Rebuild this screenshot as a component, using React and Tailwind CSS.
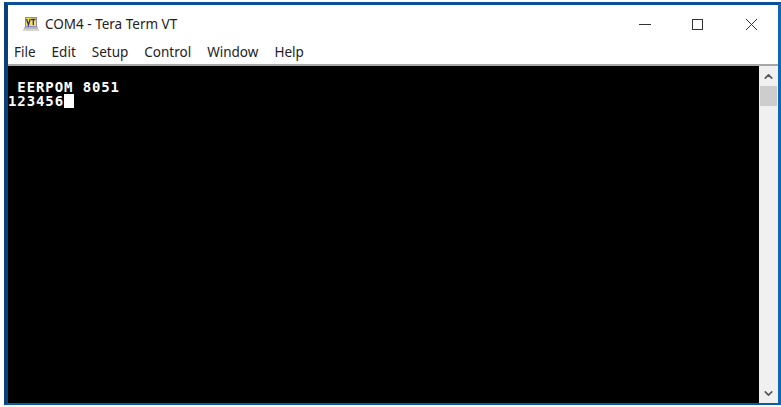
import { ChevronUp, ChevronDown } from "lucide-react";

const menus = ["File", "Edit", "Setup", "Control", "Window", "Help"];

function VtIcon() {
  return (
    <svg width="16" height="15" viewBox="0 0 16 15" className="shrink-0">
      <rect x="2" y="0" width="12" height="10" fill="#8f88c8" />
      <rect x="3" y="1" width="10" height="8" fill="#f2e24e" />
      <path d="M3.6 2 L5.4 8 L7.2 2 M8 2.5 H12.6 M10.3 2.5 V8" stroke="#2f2ba0" strokeWidth="1.3" fill="none" />
      <rect x="1" y="10" width="14" height="2" fill="#b8b8b0" />
      <rect x="0" y="12" width="16" height="2" fill="#d6d6d0" />
    </svg>
  );
}

export default function App() {
  return (
    <div className="h-[407px] w-[781px] overflow-hidden bg-white pb-[2px] pl-[4px] pt-[2px]">
      <div className="flex h-full flex-col border-b-2 border-l-4 border-r-[3px] border-t-[3px] border-b-[#0b5aa6] border-l-[#0a3f7c] border-r-[#0f66b8] border-t-[#0a4f98] bg-white">
        {/* title bar */}
        <div className="flex h-[35px] items-center font-['Noto_Sans',sans-serif] text-[13.5px] text-[#222]">
          <div className="ml-[15px] mr-[6px] mt-[4px]">
            <VtIcon />
          </div>
          <span className="mt-[4px]">COM4 - Tera Term VT</span>
          <div className="ml-auto mt-[4px] flex items-center text-[#333]">
            <div className="mr-[41px] h-px w-[12px] bg-[#333]" />
            <div className="mr-[42px] h-[11px] w-[11px] border border-[#333]" />
            <svg width="13" height="13" viewBox="0 0 13 13" className="mr-[20px]">
              <path d="M1 1 L12 12 M12 1 L1 12" stroke="#333" strokeWidth="1" />
            </svg>
          </div>
        </div>

        {/* menu bar */}
        <div className="flex h-[24px] items-center gap-[16px] pl-[6px] font-['Noto_Sans',sans-serif] text-[13.5px] text-[#222]">
          {menus.map((m) => (
            <span key={m}>{m}</span>
          ))}
        </div>
        <div className="h-[2px] bg-[#a8a8a8]" />

        {/* terminal + scrollbar */}
        <div className="flex min-h-0 flex-1">
          <div className="flex-1 bg-black pt-[14px] font-['DejaVu_Sans_Mono',monospace] text-[14px] font-bold leading-[14px] tracking-[0.9px] text-white">
            <div className="whitespace-pre"> EERPOM 8051</div>
            <div className="flex items-center whitespace-pre">
              123456
              <span className="h-[14px] w-[10px] bg-white" />
            </div>
          </div>
          <div className="flex w-[19px] flex-col items-center bg-[#f0f0f0]">
            <div className="flex h-[20px] items-center">
              <ChevronUp size={13} strokeWidth={3} className="text-[#555]" />
            </div>
            <div className="h-[20px] w-[17px] bg-[#cdcdcd]" />
            <div className="mt-auto flex h-[20px] items-center">
              <ChevronDown size={13} strokeWidth={3} className="text-[#555]" />
            </div>
          </div>
        </div>
      </div>
    </div>
  );
}
